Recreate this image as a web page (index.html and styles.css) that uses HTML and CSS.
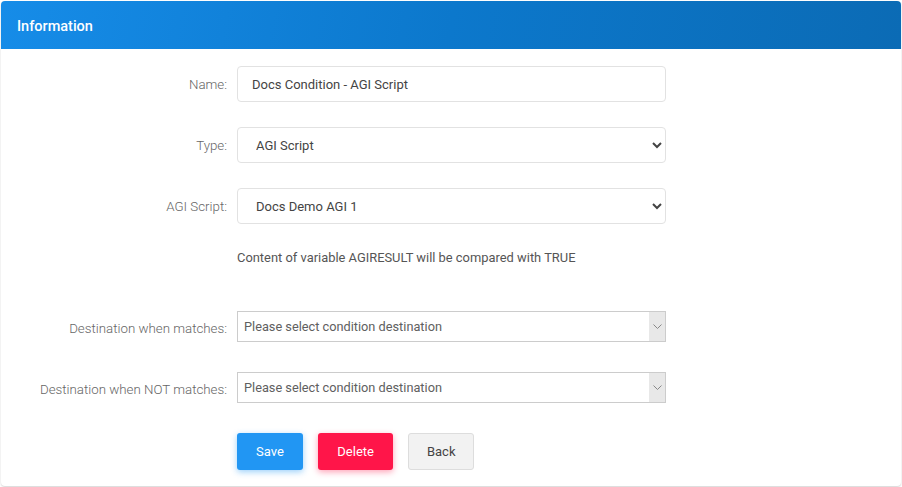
FILE: index.html
```html
<!DOCTYPE html>
<html lang="en">
<head>
    <meta charset="UTF-8">
    <title>Condition</title>
    <link rel="stylesheet" href="styles.css">
</head>
<body>
    <div class="card">
        <div class="card-header">Information</div>

        <form class="card-body">
            <!-- Name -->
            <div class="row">
                <label for="name">Name:</label>
                <input type="text" id="name" class="field" value="Docs Condition - AGI Script">
            </div>

            <!-- Type -->
            <div class="row">
                <label for="type">Type:</label>
                <select id="type" class="field">
                    <option>AGI Script</option>
                </select>
            </div>

            <!-- AGI script -->
            <div class="row">
                <label for="agi">AGI Script:</label>
                <select id="agi" class="field">
                    <option>Docs Demo AGI 1</option>
                </select>
            </div>

            <div class="row help-row">
                <span></span>
                <p class="help">Content of variable AGIRESULT will be compared with TRUE</p>
            </div>

            <!-- Destinations -->
            <div class="row dest-row">
                <label>Destination when matches:</label>
                <div class="picker">
                    <span class="picker-text">Please select condition destination</span>
                    <span class="picker-arrow">
                        <svg width="9" height="5" viewBox="0 0 9 5"><path d="M0.5 0.5 L4.5 4.5 L8.5 0.5" fill="none" stroke="#888" stroke-width="1"/></svg>
                    </span>
                </div>
            </div>

            <div class="row dest-row">
                <label>Destination when NOT matches:</label>
                <div class="picker">
                    <span class="picker-text">Please select condition destination</span>
                    <span class="picker-arrow">
                        <svg width="9" height="5" viewBox="0 0 9 5"><path d="M0.5 0.5 L4.5 4.5 L8.5 0.5" fill="none" stroke="#888" stroke-width="1"/></svg>
                    </span>
                </div>
            </div>

            <div class="row">
                <span></span>
                <div class="buttons">
                    <button type="button" class="btn btn-save">Save</button>
                    <button type="button" class="btn btn-delete">Delete</button>
                    <button type="button" class="btn btn-back">Back</button>
                </div>
            </div>
        </form>
    </div>
</body>
</html>
```

FILE: styles.css
```css
body {
    margin: 0;
    padding: 1px;
    background-color: #ffffff;
    font-family: Roboto, "Liberation Sans", sans-serif;
}

.card {
    width: 900px;
    height: 485px;
    box-sizing: border-box;
    background: #fff;
    border-radius: 4px;
    box-shadow: 0 1px 2px rgba(0, 0, 0, 0.18);
}

.card-header {
    display: flex;
    align-items: center;
    box-sizing: border-box;
    height: 48px;
    padding: 2px 16px 0 16px;
    border-radius: 4px 4px 0 0;
    background: linear-gradient(100deg, #168ce8 0%, #0c78cc 50%, #0b6bb5 100%);
    color: #fff;
    font-size: 14.5px;
    font-weight: 500;
}

.card-body {
    margin: 0;
    padding: 17px 0 0 0;
}

.row {
    display: grid;
    grid-template-columns: 226px 429px;
    column-gap: 10px;
    align-items: center;
    margin-bottom: 25px;
}

.row label {
    text-align: right;
    font-size: 13.3px;
    font-weight: 300;
    color: #666;
}

.field {
    box-sizing: border-box;
    height: 36px;
    width: 100%;
    padding: 0 14px;
    font-family: inherit;
    font-size: 13px;
    color: #444;
    background-color: #fff;
    border: 1px solid #e2e2e2;
    border-radius: 4px;
    outline: none;
}

select.field {
    padding: 0 10px 0 14px;
}

.help-row {
    margin-bottom: 44px;
}

.help {
    margin: 0;
    font-size: 12.9px;
    line-height: 18px;
    color: #555;
}

.dest-row {
    margin-bottom: 30px;
}

.dest-row label {
    padding-top: 4px;
}

.picker {
    display: flex;
    height: 31px;
    box-sizing: border-box;
    border: 1px solid #cccccc;
    background: #fff;
}

.picker-text {
    flex: 1;
    padding-left: 6px;
    line-height: 29px;
    font-size: 12.75px;
    color: #606060;
}

.picker-arrow {
    width: 16px;
    display: flex;
    align-items: center;
    justify-content: center;
    background: #e8e8e8;
}

.buttons {
    display: flex;
    gap: 15px;
}

.btn {
    height: 37px;
    padding: 0 19px;
    font-family: inherit;
    font-size: 13px;
    border: none;
    border-radius: 3px;
    cursor: pointer;
}

.btn-save {
    background-color: #2196f3;
    color: #fff;
    box-shadow: 0 2px 6px rgba(33, 150, 243, 0.45);
}

.btn-delete {
    background-color: #ff1549;
    color: #fff;
    padding: 0 19.5px;
    box-shadow: 0 2px 6px rgba(255, 21, 73, 0.4);
}

.btn-back {
    background-color: #f2f2f2;
    color: #444;
    padding: 0 17.5px;
    border: 1px solid #dddddd;
}
```
